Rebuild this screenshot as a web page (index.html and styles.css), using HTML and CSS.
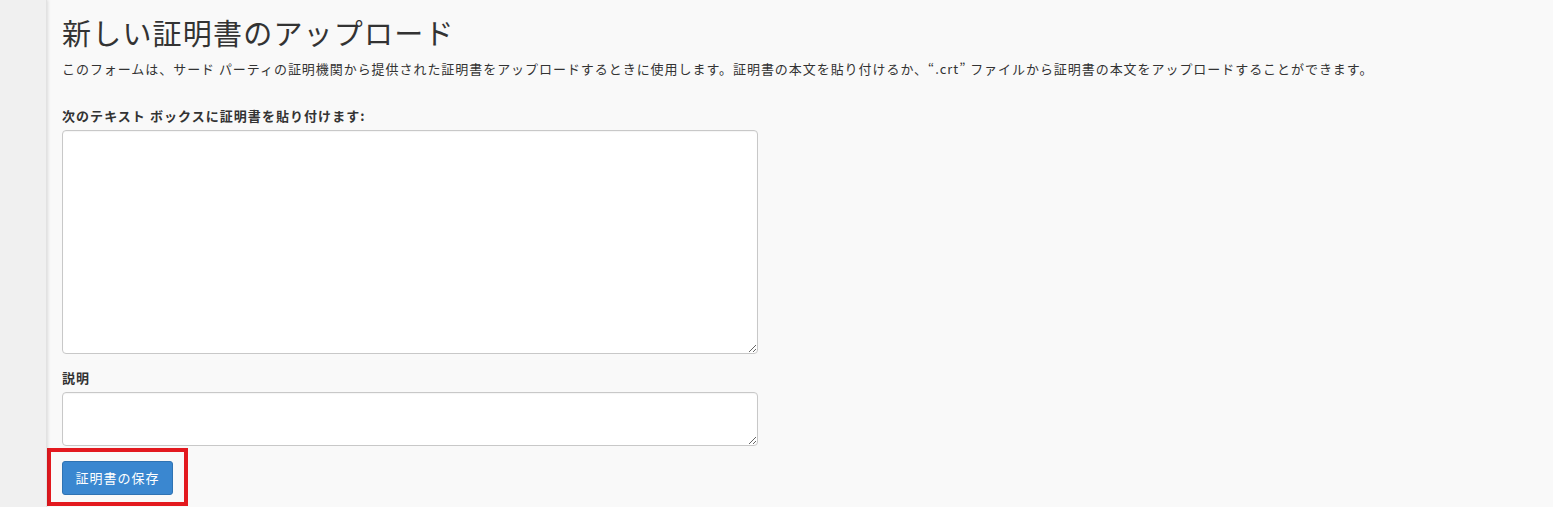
FILE: index.html
```html
<!DOCTYPE html>
<html lang="ja">
<head>
<meta charset="utf-8">
<title>新しい証明書のアップロード</title>
<link rel="stylesheet" href="styles.css">
</head>
<body>
<div class="page">
  <aside class="sidebar"></aside>
  <main class="main">
    <h1 class="title">新しい証明書のアップロード</h1>
    <p class="desc">このフォームは、サード パーティの証明機関から提供された証明書をアップロードするときに使用します。証明書の本文を貼り付けるか、“.crt” ファイルから証明書の本文をアップロードすることができます。</p>
    <form class="form">
      <label class="label" for="crt">次のテキスト ボックスに証明書を貼り付けます:</label>
      <textarea id="crt" class="input input-crt"></textarea>
      <label class="label label-desc" for="desc">説明</label>
      <textarea id="desc" class="input input-desc"></textarea>
      <div class="actions">
        <button type="button" class="btn">証明書の保存</button>
        <span class="highlight"></span>
      </div>
    </form>
  </main>
</div>
</body>
</html>
```
FILE: styles.css
```css
html, body {
  margin: 0;
  padding: 0;
  height: 100%;
  overflow: hidden;
}
body {
  font-family: "Open Sans", "Noto Sans CJK JP", sans-serif;
  color: #333;
  background: #f9f9f9;
}
.page {
  display: flex;
  min-height: 507px;
}
.sidebar {
  width: 46px;
  flex: 0 0 46px;
  background: #f0f0f0;
  box-shadow: 1px 0 3px rgba(0,0,0,0.12);
  border-right: 1px solid #e2e2e2;
  position: relative;
  z-index: 1;
}
.main {
  flex: 1;
  padding: 14px 0 0 15px;
  background: #f9f9f9;
}
.title {
  margin: 0;
  font-family: "Noto Sans CJK JP", sans-serif;
  font-weight: 400;
  font-size: 29px;
  line-height: 36px;
  color: #333;
  letter-spacing: 1.2px;
}
.desc {
  margin: 9px 0 0;
  font-family: "Noto Sans CJK JP", sans-serif;
  font-size: 13px;
  line-height: 20px;
  color: #333;
  letter-spacing: 0.95px;
  white-space: nowrap;
}
.form {
  display: flex;
  flex-direction: column;
  align-items: flex-start;
  margin-top: 27px;
}
.label {
  font-family: "Noto Sans CJK JP", sans-serif;
  font-weight: 700;
  font-size: 13px;
  line-height: 20px;
  color: #333;
  margin-bottom: 4px;
  letter-spacing: 1.05px;
}
.label-desc {
  margin-top: 14px;
}
.input {
  box-sizing: border-box;
  width: 696px;
  border: 1px solid #c8c8c8;
  border-radius: 4px;
  background: #fff;
  box-shadow: inset 0 1px 1px rgba(0,0,0,0.04);
  margin: 0;
  padding: 6px 10px;
  font: 13px "Noto Sans CJK JP", sans-serif;
  display: block;
}
.input-crt {
  height: 224px;
}
.input-desc {
  height: 54px;
}
.actions {
  position: relative;
  margin-top: 15px;
}
.btn {
  box-sizing: border-box;
  width: 111px;
  height: 34px;
  border: 1px solid #2f73b3;
  border-radius: 3px;
  background: #3a87d0;
  color: #fff;
  font-family: "Noto Sans CJK JP", sans-serif;
  font-size: 13px;
  line-height: 20px;
  letter-spacing: 1px;
  padding: 0;
  cursor: pointer;
  display: block;
}
.highlight {
  position: absolute;
  left: -15px;
  top: -13px;
  width: 141px;
  height: 58px;
  box-sizing: border-box;
  border: 4px solid #e3191f;
  pointer-events: none;
}
```
